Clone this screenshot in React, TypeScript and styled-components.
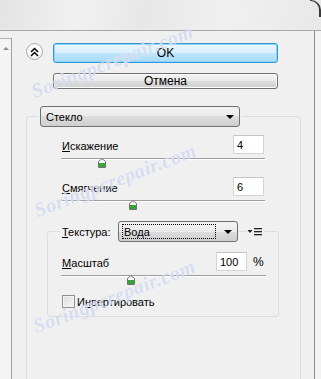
import React from "react";
import styled, { createGlobalStyle } from "styled-components";

const GlobalStyle = createGlobalStyle`
  body {
    margin: 0;
    background: #f0f0f0;
  }
`;

const Root = styled.div`
  position: relative;
  width: 321px;
  height: 379px;
  overflow: hidden;
  background: #f0f0f0;
  display: flex;
  flex-direction: column;
  font-family: "Liberation Sans", Arial, sans-serif;
  font-size: 11px;
  color: #000;
`;

const TopBar = styled.div`
  height: 30px;
  flex-shrink: 0;
  border-bottom: 1px solid #a8a8a8;
  background: linear-gradient(100deg, #e3e3e3 0%, #f1f1f1 25%, #e7e7e7 45%, #f0f0f0 70%, #e8e8e8 100%);
  display: flex;
  justify-content: flex-end;
`;

const Corner = styled.div`
  width: 9px;
  height: 16px;
  border-top: 1px solid #3a3a3a;
  border-right: 2px solid #3a3a3a;
  border-top-right-radius: 10px;
`;

const Body = styled.div`
  flex: 1;
  min-height: 0;
  display: flex;
`;

const SidePanel = styled.div`
  width: 12px;
  margin-top: 7px;
  border-top: 1px solid #b2b2b2;
  border-right: 1px solid #a0a0a0;
  background: #f4f4f4;
  display: flex;
  justify-content: center;
  padding-top: 8px;
  box-sizing: border-box;
`;

const UpArrow = styled.div`
  width: 0;
  height: 0;
  border-left: 3px solid transparent;
  border-right: 3px solid transparent;
  border-bottom: 3px solid #8c8c8c;
`;

const Main = styled.div`
  flex: 1;
  min-width: 0;
  padding: 12px 13px 0 14px;
  display: flex;
  flex-direction: column;
`;

const RightEdge = styled.div`
  width: 6px;
  border-left: 1px solid #8a8a8a;
  background: #f2f2f2;
`;

const ButtonRow = styled.div`
  display: flex;
  align-items: flex-start;
  gap: 10px;
`;

const RoundButton = styled.div`
  width: 17px;
  height: 17px;
  box-sizing: border-box;
  border-radius: 50%;
  border: 1px solid #ababab;
  background: radial-gradient(circle at 50% 40%, #ffffff 40%, #e4e4e4 100%);
  display: flex;
  align-items: center;
  justify-content: center;
`;

const PushButton = styled.div<{ $default?: boolean }>`
  width: 225px;
  height: 20px;
  box-sizing: border-box;
  border-radius: 3px;
  display: flex;
  align-items: center;
  justify-content: center;
  font-size: 12px;
  border: 1px solid ${(p) => (p.$default ? "#2f97dc" : "#707070")};
  box-shadow: ${(p) => (p.$default ? "inset 0 0 0 1px #8fd4f8" : "inset 0 0 0 1px #fbfbfb")};
  background: ${(p) =>
    p.$default
      ? "linear-gradient(#eaf6fd, #d9f0fc 50%, #bee6fd 50%, #a9dbf6)"
      : "linear-gradient(#f2f2f2, #ebebeb 50%, #dddddd 50%, #cfcfcf)"};
`;

const CancelButton = styled(PushButton)`
  margin: 10px 0 0 27px;
`;

const Group = styled.fieldset`
  margin: 17px 0 0;
  padding: 0 36px 80px 35px;
  border: 1px solid #d5dfe5;
  border-radius: 3px;
  min-width: 0;
`;

const InnerGroup = styled.fieldset`
  margin: 11px -15px 0;
  padding: 0 13px 8px 14px;
  border: 1px solid #d5dfe5;
  border-radius: 3px;
  min-width: 0;
`;

const Legend = styled.legend<{ $offset: number }>`
  padding: 0 2px;
  margin-left: ${(p) => p.$offset}px;
`;

const LegendRow = styled.div`
  display: flex;
  align-items: center;
`;

const LegendLabel = styled.span`
  width: 56px;
`;

const LegendLine = styled.div`
  width: 9px;
  height: 1px;
  background: #d5dfe5;
`;

const Combo = styled.div<{ $width: number }>`
  width: ${(p) => p.$width}px;
  height: 21px;
  box-sizing: border-box;
  display: flex;
  align-items: center;
  padding: 0 5px 0 3px;
  border: 1px solid #707070;
  border-radius: 3px;
  background: linear-gradient(#f2f2f2, #ebebeb 50%, #dddddd 50%, #cfcfcf);
`;

const ComboText = styled.span<{ $focused?: boolean }>`
  flex: 1;
  align-self: stretch;
  display: flex;
  align-items: center;
  margin: 2px 8px 2px 0;
  padding-left: 1px;
  border: 1px dotted ${(p) => (p.$focused ? "#000" : "transparent")};
`;

const DownArrow = styled.div`
  width: 0;
  height: 0;
  border-left: 4px solid transparent;
  border-right: 4px solid transparent;
  border-top: 4px solid #000;
`;

const FieldRow = styled.div<{ $mt: number }>`
  display: flex;
  align-items: center;
  margin-top: ${(p) => p.$mt}px;
`;

const FieldLabel = styled.span`
  flex: 1;
  padding-top: 2px;
`;

const NumberBox = styled.div`
  width: 31px;
  height: 19px;
  box-sizing: border-box;
  border: 1px solid #d4d4d4;
  border-top-color: #c4c4c4;
  background: #fff;
  padding: 0 3px;
  display: flex;
  align-items: center;
`;

const Percent = styled.span`
  width: 18px;
  box-sizing: border-box;
  padding-left: 6px;
  font-size: 12px;
`;

const SliderWrap = styled.div<{ $mt: number }>`
  position: relative;
  height: 10px;
  margin: ${(p) => p.$mt}px -1px 0 -1px;
`;

const Track = styled.div`
  margin-top: 4px;
  height: 1px;
  background: #9d9d9d;
  border-bottom: 1px solid #ffffff;
`;

const Thumb = styled.svg`
  position: absolute;
  top: 0;
`;

const CheckRow = styled.div`
  display: flex;
  align-items: center;
  gap: 2px;
  margin-top: 10px;
`;

const CheckBox = styled.div`
  width: 13px;
  height: 13px;
  box-sizing: border-box;
  border: 1px solid #8e8f8f;
  background: linear-gradient(135deg, #dcdcdc, #f6f6f6);
  box-shadow: inset 0 0 0 1px #f4f4f4;
`;

const Key = styled.span`
  text-decoration: underline;
`;

const Watermark = styled.span<{ $left: number; $top: number }>`
  position: absolute;
  left: ${(p) => p.$left}px;
  top: ${(p) => p.$top}px;
  width: 200px;
  line-height: 24px;
  text-align: center;
  transform: rotate(-21deg);
  font-family: "Liberation Serif", serif;
  font-style: italic;
  font-weight: bold;
  font-size: 20px;
  letter-spacing: 0.5px;
  color: rgba(150, 168, 220, 0.38);
  text-shadow: 0 0 1px rgba(255, 255, 255, 0.9);
  pointer-events: none;
  white-space: nowrap;
`;

const Slider = ({ pos, mt }: { pos: number; mt: number }) => (
  <SliderWrap $mt={mt}>
    <Track />
    <Thumb width="8" height="10" viewBox="0 0 8 10" style={{ left: `calc(${pos}% - 4px)` }}>
      <path d="M0.5 3.5 L4 0.5 L7.5 3.5 V9.5 H0.5 Z" fill="#fafafa" stroke="#707070" />
      <rect x="1" y="5" width="6" height="4" fill="#35a635" />
    </Thumb>
  </SliderWrap>
);

const NumberField = ({ label, value, mt, suffix }: { label: React.ReactNode; value: string; mt: number; suffix?: string }) => (
  <FieldRow $mt={mt}>
    <FieldLabel>{label}</FieldLabel>
    <NumberBox>{value}</NumberBox>
    {suffix && <Percent>{suffix}</Percent>}
  </FieldRow>
);

const App = () => {
  return (
    <Root>
      <GlobalStyle />
      <TopBar>
        <Corner />
      </TopBar>
      <Body>
        <SidePanel>
          <UpArrow />
        </SidePanel>
        <Main>
          <ButtonRow>
            <RoundButton>
              <svg width="9" height="10" viewBox="0 0 9 10">
                <path d="M1 5 L4.5 1.5 L8 5 M1 9 L4.5 5.5 L8 9" fill="none" stroke="#000" strokeWidth="1.5" />
              </svg>
            </RoundButton>
            <PushButton $default>OK</PushButton>
          </ButtonRow>
          <CancelButton>Отмена</CancelButton>

          <Group>
            <Legend $offset={-24}>
              <Combo $width={200}>
                <ComboText>Стекло</ComboText>
                <DownArrow />
              </Combo>
            </Legend>

            <NumberField label={<><Key>И</Key>скажение</>} value="4" mt={8} />
            <Slider pos={20} mt={3} />
            <NumberField label={<><Key>С</Key>мягчение</>} value="6" mt={9} />
            <Slider pos={35.5} mt={3} />

            <InnerGroup>
              <Legend $offset={-2}>
                <LegendRow>
                  <LegendLabel><Key>Т</Key>екстура:</LegendLabel>
                  <Combo $width={120}>
                    <ComboText $focused>Вода</ComboText>
                    <DownArrow />
                  </Combo>
                  <LegendLine />
                  <svg width="15" height="8" viewBox="0 0 15 8">
                    <path d="M0.5 2 H5.5 L3 5 Z" fill="#222" />
                    <rect x="7" y="0" width="8" height="1.3" fill="#222" />
                    <rect x="7" y="3" width="8" height="1.3" fill="#222" />
                    <rect x="7" y="6" width="8" height="1.3" fill="#222" />
                  </svg>
                </LegendRow>
              </Legend>

              <NumberField label={<><Key>М</Key>асштаб</>} value="100" mt={10} suffix="%" />
              <Slider pos={34} mt={4} />
              <CheckRow>
                <CheckBox />
                <span>И<Key>н</Key>вертировать</span>
              </CheckRow>
            </InnerGroup>
          </Group>
        </Main>
        <RightEdge />
      </Body>

      <Watermark $left={12} $top={49}>Soringpcrepair.com</Watermark>
      <Watermark $left={15} $top={168}>Soringpcrepair.com</Watermark>
      <Watermark $left={14} $top={284}>Soringpcrepair.com</Watermark>
    </Root>
  );
};

export default App;
